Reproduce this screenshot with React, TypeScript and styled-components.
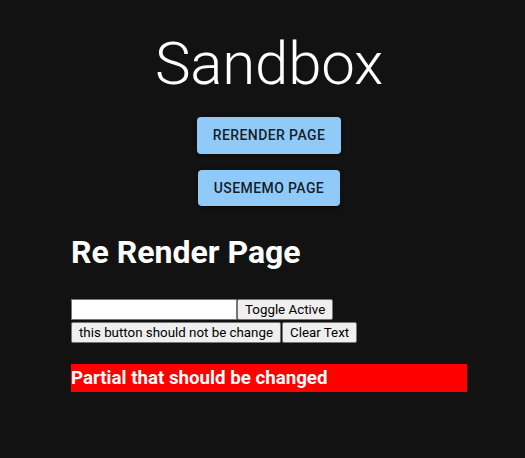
import React from "react";
import styled, { createGlobalStyle } from "styled-components";

const Global = createGlobalStyle`
  html, body { margin: 0; padding: 0; background: #121212; }
  body { font-family: Roboto, "Liberation Sans", sans-serif; color: #fff; }
  * { box-sizing: border-box; }
`;

const Page = styled.div`
  min-height: 458px;
  background: #121212;
  padding: 28px 0 0 71px;
`;

const Container = styled.main`
  width: 396px;
  display: flex;
  flex-direction: column;
`;

const Header = styled.header`
  display: flex;
  flex-direction: column;
  align-items: center;
`;

const Title = styled.h1`
  margin: 0 0 17px;
  font-size: 60px;
  font-weight: 300;
  line-height: 72px;
  letter-spacing: -0.2px;
`;

const NavButton = styled.button<{ $last?: boolean }>`
  font-family: Roboto, sans-serif;
  font-size: 14px;
  font-weight: 500;
  letter-spacing: 0.4px;
  text-transform: uppercase;
  line-height: 24.5px;
  padding: 6px 16px;
  min-width: 64px;
  border: 0;
  border-radius: 4px;
  background: #90caf9;
  color: rgba(0, 0, 0, 0.87);
  box-shadow: 0 3px 1px -2px rgba(0,0,0,0.2), 0 2px 2px 0 rgba(0,0,0,0.14), 0 1px 5px 0 rgba(0,0,0,0.12);
  margin-bottom: ${(p) => (p.$last ? "27px" : "16px")};
  cursor: pointer;
`;

const Section = styled.section`
  display: flex;
  flex-direction: column;
`;

const Heading = styled.h2`
  margin: 0 0 28px;
  font-size: 32px;
  font-weight: 700;
  line-height: 38px;
`;

const Row = styled.div<{ $gap?: number }>`
  display: flex;
  gap: ${(p) => p.$gap ?? 0}px;
  margin-bottom: 2px;
`;

const TextInput = styled.input`
  width: 166px;
  height: 21px;
  border: 1px solid #767676;
  background: #fff;
  padding: 1px 2px;
  font-family: Roboto, sans-serif;
  font-size: 13.33px;
`;

const PlainButton = styled.button`
  height: 21px;
  padding: 0 7px;
  border: 1px solid #767676;
  border-radius: 2px;
  background: #efefef;
  color: #000;
  font-family: Roboto, sans-serif;
  font-size: 13.33px;
  line-height: 19px;
  white-space: nowrap;
`;

const Partial = styled.h3`
  margin: 19px 0 0;
  background: #ff0000;
  color: #fff;
  font-size: 18.72px;
  font-weight: 700;
  line-height: 28px;
  height: 28px;
`;

export default function App() {
  return (
    <>
      <Global />
      <Page>
        <Container>
          <Header>
            <Title>Sandbox</Title>
            <NavButton>Rerender Page</NavButton>
            <NavButton $last>useMemo Page</NavButton>
          </Header>
          <Section>
            <Heading>Re Render Page</Heading>
            <Row>
              <TextInput type="text" />
              <PlainButton>Toggle Active</PlainButton>
            </Row>
            <Row $gap={1}>
              <PlainButton>this button should not be change</PlainButton>
              <PlainButton>Clear Text</PlainButton>
            </Row>
            <Partial>Partial that should be changed</Partial>
          </Section>
        </Container>
      </Page>
    </>
  );
}
